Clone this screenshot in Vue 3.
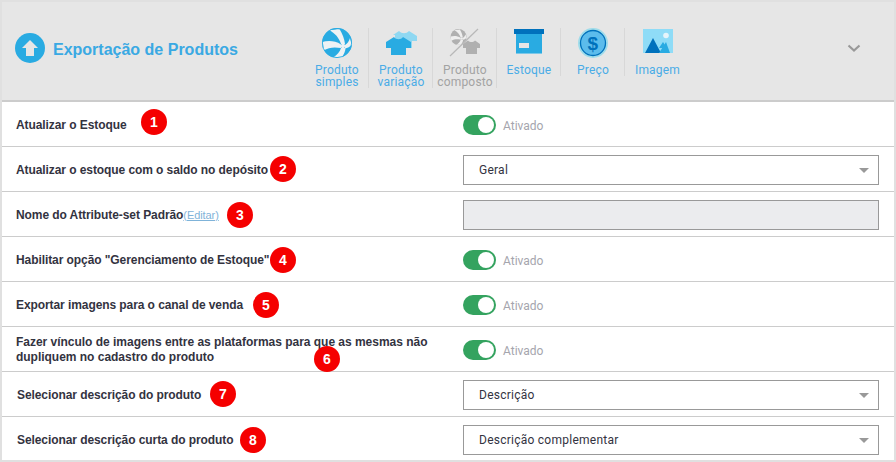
<script setup>
const tools = [
  { id: 'ball', lines: ['Produto', 'simples'] },
  { id: 'shirt', lines: ['Produto', 'variação'] },
  { id: 'combo', lines: ['Produto', 'composto'], muted: true },
  { id: 'box', lines: ['Estoque'] },
  { id: 'coin', lines: ['Preço'] },
  { id: 'image', lines: ['Imagem'] }
]
const rows = [
  { label: 'Atualizar o Estoque', type: 'toggle' },
  { label: 'Atualizar o estoque com o saldo no depósito', type: 'select', value: 'Geral' },
  { label: 'Nome do Attribute-set Padrão', edit: true, type: 'input' },
  { label: 'Habilitar opção "Gerenciamento de Estoque"', type: 'toggle' },
  { label: 'Exportar imagens para o canal de venda', type: 'toggle' },
  { label: 'Fazer vínculo de imagens entre as plataformas para que as mesmas não dupliquem no cadastro do produto', type: 'toggle', loose: true },
  { label: 'Selecionar descrição do produto', type: 'select', value: 'Descrição', shifted: true },
  { label: 'Selecionar descrição curta do produto', type: 'select', value: 'Descrição complementar', shifted: true }
]
const badges = [
  [154, 122], [283, 169], [240, 215], [283, 260],
  [266, 305], [327, 359], [223, 394], [253, 440]
]
const ballBands = [
  'M20 16 C18 10 14 5 8 2.3 L18.5 0.9 C21.5 6 23.5 11 24 16 Z',
  'M20 16.5 C14 12.5 7 12.5 1.1 14 L2.5 22.5 C8 19 14 19 20 20 Z',
  'M20 20 C19 24 16 27 12 29.5 L20.5 29.7 C23 26.5 24.5 23 24.5 20 Z',
  'M24 17 C26.5 15.5 28 13.5 29 10 L31 16.5 C29 19 26.5 20 24 20.5 Z'
]
</script>

<template>
  <div class="panel">
    <header class="head">
      <div class="title-wrap">
        <svg class="up" width="30" height="30" viewBox="0 0 30 30">
          <circle cx="15" cy="15" r="15" fill="#29abe2" />
          <path d="M15 7 L23 15 H19 V23 H11 V15 H7 Z" fill="#e6e6e6" />
        </svg>
        <h1 class="title">Exportação de Produtos</h1>
      </div>
      <nav class="tools">
        <div v-for="t in tools" :key="t.id" class="tool" :class="{ muted: t.muted }">
          <svg class="tool-icon" width="32" height="30" viewBox="0 0 32 30">
            <g v-if="t.id === 'ball'">
              <circle cx="16" cy="15" r="15" fill="#29abe2" />
              <path v-for="d in ballBands" :key="d" :d="d" fill="#eef2f4" />
              <circle cx="22" cy="18" r="2.2" fill="#eef2f4" />
              <circle cx="16" cy="15" r="14.6" fill="none" stroke="#29abe2" stroke-width="0.9" />
            </g>
            <g v-else-if="t.id === 'shirt'">
              <path d="M8 7 L14 3 C17 6 21 6 24 3 L32 8 V13 H27 V20 H10 V7 Z" fill="#8fd8f2" />
              <path d="M1 14 L9 9 C11 12 16 12 18 9 L26 14 V20 H21 V27 H6 V20 H1 Z" fill="#29abe2" />
            </g>
            <g v-else-if="t.id === 'combo'">
              <g transform="translate(1 1) scale(0.533)">
                <circle cx="16" cy="15" r="15" fill="#b0b0b0" />
                <path v-for="d in ballBands" :key="d" :d="d" fill="#eeeeee" />
                <circle cx="22" cy="18" r="2.2" fill="#eeeeee" />
              </g>
              <path d="M14 16 L19 12.5 C21 14.5 24 14.5 26 12.5 L31 16 V20 H28 V26 H17 V20 H14 Z" fill="#b0b0b0" />
              <path d="M29 1 L1 28" stroke="#b8b8b8" stroke-width="1.2" fill="none" />
            </g>
            <g v-else-if="t.id === 'box'">
              <rect x="1" y="1" width="30" height="5" fill="#0071bc" />
              <rect x="3" y="6" width="26" height="19" fill="#29abe2" />
              <rect x="3" y="25" width="26" height="1" fill="#7cc8e8" />
              <rect x="6" y="15" width="10" height="5" fill="#e6e6e6" />
            </g>
            <g v-else-if="t.id === 'coin'">
              <circle cx="16" cy="15" r="15" fill="#9fdcea" />
              <circle cx="16" cy="15" r="12.5" fill="#5cbcec" stroke="#0071bc" stroke-width="1.3" />
              <text x="16" y="21.5" text-anchor="middle" class="dollar">$</text>
            </g>
            <g v-else>
              <rect x="1" y="1" width="30" height="24" fill="#8fdcf7" />
              <circle cx="24" cy="7.5" r="2.8" fill="#e6f4fa" />
              <path d="M3 25 L11 10 L19 25 Z" fill="#0071bc" />
              <path d="M17 25 L24 14 L28 25 Z" fill="#29abe2" />
              <path d="M17 20 L21 14 L25 20 Z" fill="#29abe2" />
            </g>
          </svg>
          <span v-for="l in t.lines" :key="l" class="tool-line">{{ l }}</span>
        </div>
      </nav>
      <svg class="chevron" width="14" height="9" viewBox="0 0 14 9">
        <path d="M1.5 1.5 L7 6.5 L12.5 1.5" fill="none" stroke="#999" stroke-width="2.2" />
      </svg>
    </header>

    <section class="list">
      <div v-for="(r, i) in rows" :key="i" class="row">
        <div class="label" :class="{ indented: r.shifted, loose: r.loose }">
          {{ r.label }}<a v-if="r.edit" class="edit">(Editar)</a>
        </div>
        <div class="control">
          <template v-if="r.type === 'toggle'">
            <span class="switch"><span class="knob"></span></span>
            <span class="state">Ativado</span>
          </template>
          <div v-else-if="r.type === 'select'" class="field">
            {{ r.value }}
            <span class="caret"></span>
          </div>
          <div v-else class="field disabled"></div>
        </div>
      </div>
    </section>

    <span
      v-for="(b, i) in badges"
      :key="i"
      class="badge"
      :style="{ left: b[0] - 13 + 'px', top: b[1] - 13 + 'px' }"
    >{{ i + 1 }}</span>
  </div>
</template>

<style scoped>
.panel {
  position: relative;
  box-sizing: border-box;
  width: 896px;
  height: 462px;
  padding: 2px;
  background: #e0e0e0;
  font-family: "Liberation Sans", Arial, sans-serif;
  overflow: hidden;
}
.head {
  position: relative;
  box-sizing: border-box;
  height: 100px;
  display: flex;
  background: #e6e6e6;
  border-bottom: 2px solid #cccccc;
}
.title-wrap {
  width: 303px;
  box-sizing: border-box;
  padding: 31px 0 0 13px;
  display: flex;
  align-items: flex-start;
  gap: 8px;
}
.title {
  margin: 2px 0 0;
  font-size: 16px;
  line-height: 30px;
  font-weight: 700;
  color: #3aa9e3;
}
.tools {
  display: flex;
  align-items: flex-start;
  padding-top: 26px;
}
.tool {
  box-sizing: border-box;
  width: 64px;
  padding-left: 1px;
  display: flex;
  flex-direction: column;
  align-items: center;
  border-right: 1px solid #d8d8d8;
  font-family: Roboto, "Liberation Sans", sans-serif;
  font-size: 12px;
  letter-spacing: 0.2px;
  color: #4aace6;
}
.tool:last-child {
  border-right: 0;
}
.tool.muted {
  color: #a3a3a3;
}
.tool-icon {
  margin-bottom: 6px;
}
.tool-line {
  line-height: 12px;
  white-space: nowrap;
}
.dollar {
  font-family: "Liberation Sans", sans-serif;
  font-size: 19px;
  font-weight: 700;
  fill: #0071bc;
}
.chevron {
  position: absolute;
  left: 845px;
  top: 42px;
}
.list {
  display: flex;
  flex-direction: column;
  background: #fff;
  height: 358px;
}
.row {
  box-sizing: border-box;
  height: 45px;
  flex: none;
  display: flex;
  align-items: center;
  padding-top: 2px;
  border-bottom: 1px solid #cccccc;
}
.row:last-child {
  height: 44px;
  border-bottom: 0;
}
.label {
  box-sizing: border-box;
  width: 461px;
  padding: 0 20px 0 14px;
  font-size: 12px;
  line-height: 15px;
  font-weight: 700;
  letter-spacing: -0.08px;
  color: #33333f;
}
.label.loose {
  letter-spacing: -0.02px;
}
.label.indented {
  padding-left: 15px;
}
.edit {
  font-weight: 400;
  font-size: 11px;
  color: #7fb3d9;
  text-decoration: underline;
}
.control {
  display: flex;
  align-items: center;
  flex: 1;
  font-family: Roboto, "Liberation Sans", sans-serif;
}
.switch {
  width: 33px;
  height: 20px;
  border-radius: 10px;
  background: #34a35f;
  position: relative;
  flex: none;
}
.knob {
  position: absolute;
  right: 2px;
  top: 2px;
  width: 16px;
  height: 16px;
  border-radius: 50%;
  background: #fff;
}
.state {
  margin: 2px 0 0 7px;
  font-size: 12px;
  color: #a5a5ad;
}
.field {
  position: relative;
  box-sizing: border-box;
  width: 416px;
  height: 30px;
  border: 1px solid #999;
  padding-left: 15px;
  font-size: 12px;
  letter-spacing: 0.25px;
  line-height: 28px;
  color: #33333f;
}
.field.disabled {
  background: #ebecee;
}
.caret {
  position: absolute;
  right: 9px;
  top: 12px;
  width: 0;
  height: 0;
  border-left: 5px solid transparent;
  border-right: 5px solid transparent;
  border-top: 5px solid #999;
}
.badge {
  position: absolute;
  width: 26px;
  height: 26px;
  border-radius: 50%;
  background: #f50000;
  color: #fff;
  font-size: 14px;
  font-weight: 700;
  line-height: 26px;
  text-align: center;
}
</style>
